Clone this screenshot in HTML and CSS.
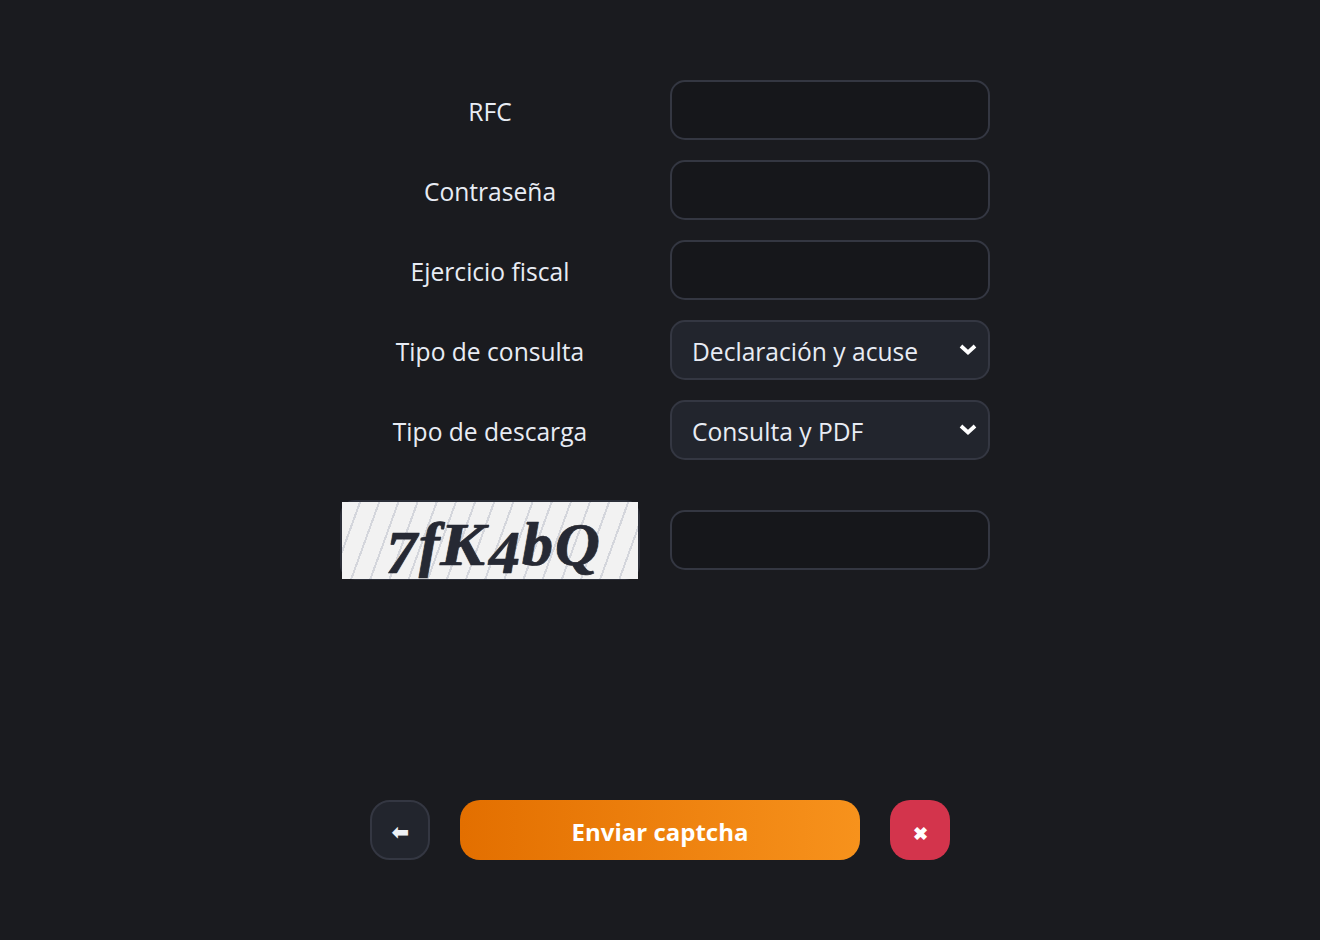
FILE: index.html
```html
<!DOCTYPE html>
<html lang="es">
<head>
<meta charset="utf-8">
<title>Consulta</title>
<link rel="stylesheet" href="styles.css">
</head>
<body>
<main class="page">
  <form class="form">
    <label class="label">RFC</label>
    <input class="field" type="text">
    <label class="label">Contraseña</label>
    <input class="field" type="password">
    <label class="label">Ejercicio fiscal</label>
    <input class="field" type="text">
    <label class="label">Tipo de consulta</label>
    <div class="select-wrap">
      <select class="field select"><option>Declaración y acuse</option></select>
      <svg class="chevron" viewBox="0 0 18 12" aria-hidden="true"><path d="M2 2 L9 8.5 L16 2"/></svg>
    </div>
    <label class="label">Tipo de descarga</label>
    <div class="select-wrap">
      <select class="field select"><option>Consulta y PDF</option></select>
      <svg class="chevron" viewBox="0 0 18 12" aria-hidden="true"><path d="M2 2 L9 8.5 L16 2"/></svg>
    </div>
    <div class="captcha"><div class="captcha-img"><span class="captcha-text"><span class="low">7</span>f<span class="wide">K</span><span class="low">4</span>bQ</span></div></div>
    <input class="field captcha-input" type="text">
  </form>
  <div class="actions">
    <button class="btn back" type="button">⬅</button>
    <button class="btn submit" type="button">Enviar captcha</button>
    <button class="btn close" type="button">✖</button>
  </div>
</main>
</body>
</html>
```
FILE: styles.css
```css
* { box-sizing: border-box; }
html, body { margin: 0; height: 100%; }
body {
  background: #1a1b1f;
  color: #e8ecf4;
  font-family: "Open Sans", "Noto Sans", "Liberation Sans", sans-serif;
}
.page {
  width: 1320px;
  height: 940px;
  padding-top: 80px;
  display: flex;
  flex-direction: column;
  align-items: center;
}
.form {
  display: grid;
  grid-template-columns: 300px 320px;
  column-gap: 30px;
  row-gap: 20px;
  align-items: center;
  margin-left: 10px;
}
.label {
  text-align: center;
  font-size: 24.6px;
  line-height: 34px;
  padding-top: 4px;
}
.field {
  display: block;
  height: 60px;
  width: 320px;
  border: 2px solid #343742;
  border-radius: 15px;
  background-color: #16171b;
  color: #e8ecf4;
  font-family: inherit;
  font-size: 24.6px;
  padding: 0 20px;
  outline: none;
}
.select-wrap { position: relative; }
.select {
  appearance: none;
  background-color: #22252d;
  padding-top: 3px;
}
.chevron {
  position: absolute;
  top: 24px;
  right: 13px;
  width: 18px;
  height: 12px;
  pointer-events: none;
}
.chevron path {
  fill: none;
  stroke: #fff;
  stroke-width: 3.8;
}
.captcha {
  grid-column: 1;
  height: 80px;
  margin-top: 20px;
  border: 2px solid #2c2f39;
  border-radius: 15px;
}
.captcha-img {
  height: 77px;
  background-color: #f2f2f2;
  background-image: repeating-linear-gradient(110deg, transparent 0 16px, #d4d6dc 16px 18px);
  display: flex;
  justify-content: center;
  align-items: flex-start;
  padding-top: 12px;
}
.captcha-input { margin-top: 20px; }
.captcha-text {
  font-family: "Liberation Serif", serif;
  font-weight: 700;
  font-style: italic;
  font-size: 62px;
  line-height: 60px;
  letter-spacing: 2px;
  color: #262934;
  -webkit-text-stroke: 0.7px #262934;
  filter: blur(0.5px);
  padding-left: 8px;
  text-shadow: -1px 0 rgba(200, 120, 30, 0.5), 1px 0 rgba(40, 120, 200, 0.5);
}
.low {
  display: inline-block;
  transform: translateY(8px);
}
.wide {
  display: inline-block;
  transform: scaleX(1.08);
  margin-right: 4px;
}
.actions {
  margin-top: 220px;
  display: flex;
  gap: 30px;
  align-items: center;
}
.btn {
  height: 60px;
  border: 0;
  border-radius: 20px;
  color: #fff;
  font-family: inherit;
  font-weight: 700;
  font-size: 24px;
  padding: 2px 0 0;
}
.back {
  width: 60px;
  background: #22252d;
  border: 2px solid #343742;
  font-size: 20px;
  color: #eef1f5;
}
.submit {
  width: 400px;
  background: linear-gradient(90deg, #e36f00, #f7921c);
}
.close {
  width: 60px;
  background: #d3344c;
  font-size: 18px;
  padding-top: 5px;
}
```
